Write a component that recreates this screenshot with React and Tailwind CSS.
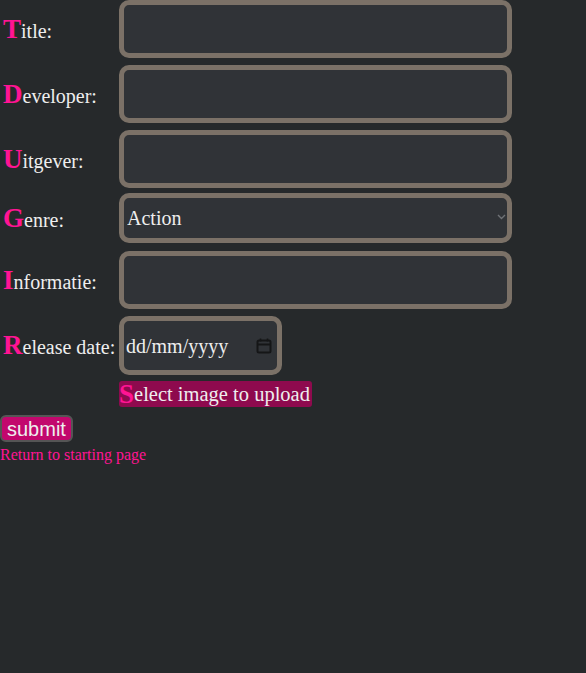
function Label({ first, rest }) {
  return (
    <span className="text-[20px] text-[#eeeeee]">
      <span className="text-[27px] font-bold text-[#ff1493]">{first}</span>
      {rest}
    </span>
  );
}

function Row({ first, rest, children, className = '' }) {
  return (
    <div className={`flex items-center ${className}`}>
      <div className="w-[119px] shrink-0 pl-[3px]">
        <Label first={first} rest={rest} />
      </div>
      {children}
    </div>
  );
}

const box =
  'h-[58px] w-[393px] rounded-[10px] border-[5px] border-[#7b7167] bg-[#303337] outline-none px-2 text-[20px] text-[#eeeeee]';

export default function App() {
  return (
    <div
      className="min-h-screen bg-[#26292b]"
      style={{ fontFamily: '"Liberation Serif", "Times New Roman", serif' }}
    >
      <form className="flex flex-col">
        <Row first="T" rest="itle:">
          <input type="text" className={box} />
        </Row>
        <Row first="D" rest="eveloper:" className="mt-[7px]">
          <input type="text" className={box} />
        </Row>
        <Row first="U" rest="itgever:" className="mt-[7px]">
          <input type="text" className={box} />
        </Row>
        <Row first="G" rest="enre:" className="mt-[5px]">
          <div className="relative">
            <select className="h-[50px] w-[393px] appearance-none rounded-[10px] border-[5px] border-[#7b7167] bg-[#303337] pl-[3px] text-[20px] text-[#eeeeee] outline-none">
              <option>Action</option>
              <option>Adventure</option>
              <option>RPG</option>
            </select>
            <svg
              className="pointer-events-none absolute right-[6px] top-[21px]"
              width="9"
              height="6"
              viewBox="0 0 9 6"
              fill="none"
              stroke="#6f7276"
              strokeWidth="1.4"
            >
              <path d="M1 1l3.5 3.5L8 1" />
            </svg>
          </div>
        </Row>
        <Row first="I" rest="nformatie:" className="mt-[8px]">
          <input type="text" className={box} />
        </Row>
        <Row first="R" rest="elease date:" className="mt-[7px]">
          <div className="flex h-[59px] w-[163px] items-center justify-between rounded-[10px] border-[5px] border-[#7b7167] bg-[#303337] pl-[2px] pr-[4px] text-[20px] text-[#eeeeee]">
            <span>dd/mm/yyyy</span>
            <svg width="18" height="18" viewBox="0 0 18 18" fill="none">
              <rect x="2.5" y="3.5" width="13" height="12" rx="1.5" stroke="#151617" strokeWidth="2" />
              <path d="M2.5 7.5h13" stroke="#151617" strokeWidth="2" />
              <path d="M5.5 1.5v3M12.5 1.5v3" stroke="#151617" strokeWidth="1.6" />
            </svg>
          </div>
        </Row>
        <div className="mt-[6px] flex pl-[119px]">
          <label className="flex h-[26px] items-center rounded-[3px] bg-[#8e0a4e] pr-[2px] text-[20.5px] text-[#eeeeee]">
            <span className="text-[27px] font-bold leading-none text-[#ff1493]">S</span>
            elect image to upload
          </label>
        </div>
        <div className="mt-[8px]">
          <button
            type="button"
            className="h-[27px] rounded-[6px] border-2 border-[#555] bg-[#c2076d] px-[5px] text-[20px] leading-none text-[#eeeeee]"
            style={{ fontFamily: '"Liberation Sans", Arial, sans-serif' }}
          >
            submit
          </button>
        </div>
        <div>
          <a href="#" className="text-[16px] leading-[17px] text-[#ff1493]">
            Return to starting page
          </a>
        </div>
      </form>
    </div>
  );
}
